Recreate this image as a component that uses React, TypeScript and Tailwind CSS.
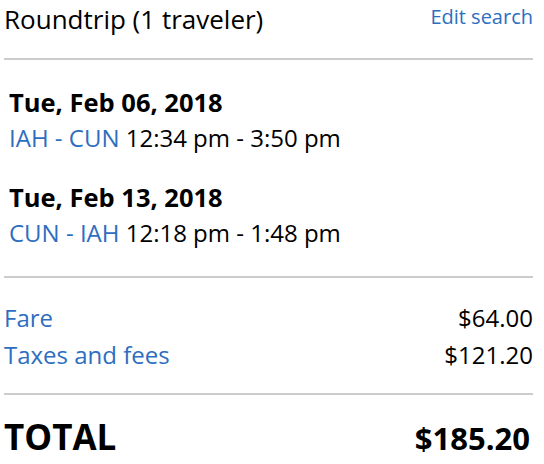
const flights = [
  { date: 'Tue, Feb 06, 2018', route: 'IAH - CUN', time: '12:34 pm - 3:50 pm' },
  { date: 'Tue, Feb 13, 2018', route: 'CUN - IAH', time: '12:18 pm - 1:48 pm' },
];

const charges = [
  { label: 'Fare', amount: '$64.00' },
  { label: 'Taxes and fees', amount: '$121.20' },
];

export default function App() {
  return (
    <div className="w-[544px] h-[464px] bg-white overflow-hidden font-['Open_Sans',sans-serif] text-black">
      <div className="ml-1 w-[529px]">
        {/* header */}
        <div className="flex justify-between items-start pt-[2px] pb-[22px] border-b-2 border-[#cccccc]">
          <h2 className="text-[26px] leading-[34px]">Roundtrip (1 traveler)</h2>
          <a href="#" className="mt-px text-[20px] leading-[28px] text-[#2d6ec0]">
            Edit search
          </a>
        </div>

        {/* flights */}
        <div className="pl-[5px] pt-6 pb-[25px] flex flex-col gap-[23px] border-b-2 border-[#cccccc]">
          {flights.map((f) => (
            <div key={f.date} className="leading-[36px]">
              <p className="text-[25.5px] font-bold">{f.date}</p>
              <p className="text-[24px]">
                <span className="text-[#2d6ec0]">{f.route}</span> {f.time}
              </p>
            </div>
          ))}
        </div>

        {/* charges */}
        <div className="pt-[21px] pb-5 border-b-2 border-[#cccccc]">
          {charges.map((c) => (
            <div key={c.label} className="flex justify-between text-[24px] leading-[37px]">
              <span className="text-[#2d6ec0]">{c.label}</span>
              <span>{c.amount}</span>
            </div>
          ))}
        </div>

        {/* total */}
        <div className="flex justify-between items-baseline pt-[18px] leading-[48px] font-bold">
          <span className="text-[35px]">TOTAL</span>
          <span className="text-[31px] pr-[3px]">$185.20</span>
        </div>
      </div>
    </div>
  );
}
